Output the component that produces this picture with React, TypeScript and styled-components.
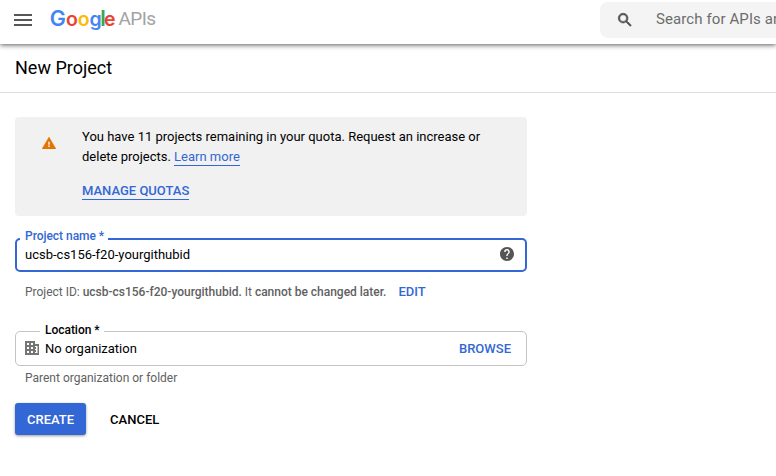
import React from "react";
import styled, { createGlobalStyle } from "styled-components";

const Global = createGlobalStyle`
  * { box-sizing: border-box; }
  html, body { margin: 0; background: #fff; overflow: hidden; }
  body { font-family: Roboto, "Liberation Sans", sans-serif; font-size: 13px; color: #000; }
  button { font: inherit; border: 0; background: none; padding: 0; margin: 0; cursor: pointer; }
`;

const Page = styled.div`
  width: 100%;
  height: 476px;
  overflow: hidden;
`;

const TopBar = styled.header`
  display: flex;
  align-items: flex-start;
  height: 44px;
  box-shadow: 0 1px 5px rgba(0, 0, 0, 0.65);
`;

const MenuButton = styled.button`
  display: flex;
  flex-direction: column;
  gap: 3px;
  width: 18px;
  margin: 14px 18px 0 14px !important;
`;

const MenuLine = styled.span`
  height: 2px;
  background: #575757;
`;

const Brand = styled.div`
  flex: 1;
  svg { display: block; overflow: visible; }
`;

const SearchBox = styled.div`
  display: flex;
  align-items: center;
  width: 176px;
  height: 36px;
  margin-top: 2px;
  padding: 0 0 2px 16px;
  overflow: hidden;
  white-space: nowrap;
  border-radius: 8px 0 0 8px;
  background: #f4f4f4;
  color: #6c6c6c;
  font-size: 15px;
  letter-spacing: 0.1px;
  svg { flex: none; margin: 2px 22px 0 0; }
`;

const TitleBar = styled.div`
  display: flex;
  align-items: center;
  height: 49px;
  padding: 0 0 2px 15px;
  border-bottom: 1px solid #dedede;
`;

const Title = styled.h1`
  margin: 0;
  font-size: 18px;
  font-weight: 400;
`;

const Form = styled.main`
  width: 512px;
  margin: 24px 0 0 15px;
`;

const Notice = styled.section`
  display: flex;
  height: 99px;
  padding: 10px 0 0 27px;
  border-radius: 4px;
  background: #f1f1f1;
  svg { flex: none; margin: 10px 26px 0 0; }
`;

const NoticeText = styled.p`
  margin: 0 0 15px;
  line-height: 20px;
`;

const Link = styled.a<{ $strong?: boolean }>`
  display: inline-block;
  line-height: 17px;
  color: #3367d6;
  font-weight: ${(p) => (p.$strong ? 500 : 400)};
  border-bottom: 1px solid #3367d6;
`;

const Field = styled.fieldset<{ $active?: boolean }>`
  min-width: 0;
  height: ${(p) => (p.$active ? 34 : 35)}px;
  margin: ${(p) => (p.$active ? "22px" : "31px")} 0 0;
  padding: 0;
  border: ${(p) => (p.$active ? "2px solid #3367d6" : "1px solid #c4c4c4")};
  border-radius: 5px;
`;

const Legend = styled.legend<{ $active?: boolean }>`
  display: flex;
  align-items: center;
  height: ${(p) => (p.$active ? 2 : 1)}px;
  margin-left: ${(p) => (p.$active ? 3 : 24)}px;
  padding: 0 4px 0 5px;
  font-size: 12px;
  letter-spacing: -0.03px;
  font-weight: 500;
  color: ${(p) => (p.$active ? "#3367d6" : "#000")};
  span { line-height: 14px; padding-bottom: ${(p) => (p.$active ? 7 : 3)}px; }
`;

const FieldRow = styled.div<{ $active?: boolean }>`
  display: flex;
  align-items: center;
  height: ${(p) => (p.$active ? 30 : 33)}px;
  padding: ${(p) => (p.$active ? "0 11px 1px 8px" : "0 15px 0 9px")};
  svg { flex: none; margin-bottom: 2px; }
`;

const Value = styled.span`
  flex: 1;
`;

const LocationValue = styled(Value)`
  padding-left: 6px;
`;

const TextButton = styled.button`
  color: #3367d6;
  font-weight: 500;
  line-height: 16px;
`;

const IdRow = styled.div`
  display: flex;
  align-items: center;
  gap: 12px;
  height: 16px;
  margin-top: 12px;
  padding-left: 10px;
  color: #616161;
  font-size: 12px;
  letter-spacing: -0.01px;
  b { font-weight: 500; }
  button { font-size: 13px; }
`;

const Hint = styled.div`
  margin-top: 4px;
  padding-left: 10px;
  line-height: 16px;
  font-size: 12px;
  color: #616161;
`;

const Actions = styled.div`
  display: flex;
  margin-top: 17px;
  gap: 12px;
`;

const ActionButton = styled.button<{ $primary?: boolean }>`
  height: 32px;
  padding: 0 12px;
  font-weight: 500;
  border-radius: 3px;
  color: ${(p) => (p.$primary ? "#fff" : "#000")};
  background: ${(p) => (p.$primary ? "#3367d6" : "transparent")};
  box-shadow: ${(p) => (p.$primary ? "0 1px 3px rgba(0, 0, 0, 0.4)" : "none")};
`;

const Logo = () => (
  <svg width="110" height="40" role="img" aria-label="Google APIs">
    <g fontFamily="Inter" fontWeight="600">
      <text x="-0.3" y="26" fontSize="21.5" fill="#4285f4">G</text>
      <text x="16" y="26" fontSize="19.5" fill="#ea4335">o</text>
      <text x="27.8" y="26" fontSize="19.5" fill="#fbbc05">o</text>
      <text x="39.4" y="26" fontSize="19.5" fill="#4285f4">g</text>
      <text x="50.3" y="26" fontSize="21" fill="#34a853">l</text>
      <text x="54" y="26" fontSize="19.5" fill="#ea4335">e</text>
    </g>
    <text x="68.5" y="25" fontFamily="Roboto" fontSize="19" fontWeight="400" fill="#a3a3a3" textLength="37.5">APIs</text>
  </svg>
);

const SearchIcon = () => (
  <svg width="18" height="18" viewBox="0 0 24 24" fill="#4d4d4d" stroke="#4d4d4d" strokeWidth="0.8">
    <path d="M15.5 14h-.79l-.28-.27A6.47 6.47 0 0 0 16 9.5 6.5 6.5 0 1 0 9.5 16c1.61 0 3.09-.59 4.23-1.57l.27.28v.79l5 4.99L20.49 19zm-6 0a4.5 4.5 0 1 1 0-9 4.5 4.5 0 0 1 0 9z" />
  </svg>
);

const WarningIcon = () => (
  <svg width="14" height="12" viewBox="0 0 14 12">
    <path d="M7 0 14 12H0z" fill="#e37400" stroke="#e37400" strokeWidth="0.4" />
    <path d="M6.3 4.8h1.4v3H6.3zM6.3 8.6h1.4v1.3H6.3z" fill="#fff" />
  </svg>
);

const HelpIcon = () => (
  <svg width="14" height="14" viewBox="2 2 20 20" fill="#555">
    <path d="M12 2C6.48 2 2 6.48 2 12s4.48 10 10 10 10-4.48 10-10S17.52 2 12 2zm1 17h-2v-2h2zm2.07-7.75-.9.92C13.45 12.9 13 13.5 13 15h-2v-.5c0-1.1.45-2.1 1.17-2.83l1.24-1.26c.37-.36.59-.86.59-1.41a2 2 0 0 0-4 0H8a4 4 0 0 1 8 0c0 .88-.36 1.68-.93 2.25z" />
  </svg>
);

const BuildingIcon = () => (
  <svg width="14" height="14" viewBox="0 0 14 14">
    <path fill="#757575" fillRule="evenodd" d="M0 0h10v3h4v11H0zM2 2v2h2V2zM6 2v2h2V2zM2 6v2h2V6zM6 6v2h2V6zM2 10v2h2v-2zM6 10v2h2v-2zM10 5v1h1v2h-1v1h1v2h-1v1h2.5V5z" />
  </svg>
);

export default function App() {
  return (
    <Page>
      <Global />
      <TopBar>
        <MenuButton aria-label="Menu">
          <MenuLine />
          <MenuLine />
          <MenuLine />
        </MenuButton>
        <Brand>
          <Logo />
        </Brand>
        <SearchBox>
          <SearchIcon />
          Search for APIs and Services
        </SearchBox>
      </TopBar>
      <TitleBar>
        <Title>New Project</Title>
      </TitleBar>
      <Form>
        <Notice>
          <WarningIcon />
          <div>
            <NoticeText>
              You have 11 projects remaining in your quota. Request an increase or
              <br />
              delete projects. <Link>Learn more</Link>
            </NoticeText>
            <Link $strong>MANAGE QUOTAS</Link>
          </div>
        </Notice>
        <Field $active>
          <Legend $active>
            <span>Project name *</span>
          </Legend>
          <FieldRow $active>
            <Value>ucsb-cs156-f20-yourgithubid</Value>
            <HelpIcon />
          </FieldRow>
        </Field>
        <IdRow>
          <span>
            Project ID: <b>ucsb-cs156-f20-yourgithubid.</b> It <b>cannot be changed later.</b>
          </span>
          <TextButton>EDIT</TextButton>
        </IdRow>
        <Field>
          <Legend>
            <span>Location *</span>
          </Legend>
          <FieldRow>
            <BuildingIcon />
            <LocationValue>No organization</LocationValue>
            <TextButton>BROWSE</TextButton>
          </FieldRow>
        </Field>
        <Hint>Parent organization or folder</Hint>
        <Actions>
          <ActionButton $primary>CREATE</ActionButton>
          <ActionButton>CANCEL</ActionButton>
        </Actions>
      </Form>
    </Page>
  );
}
